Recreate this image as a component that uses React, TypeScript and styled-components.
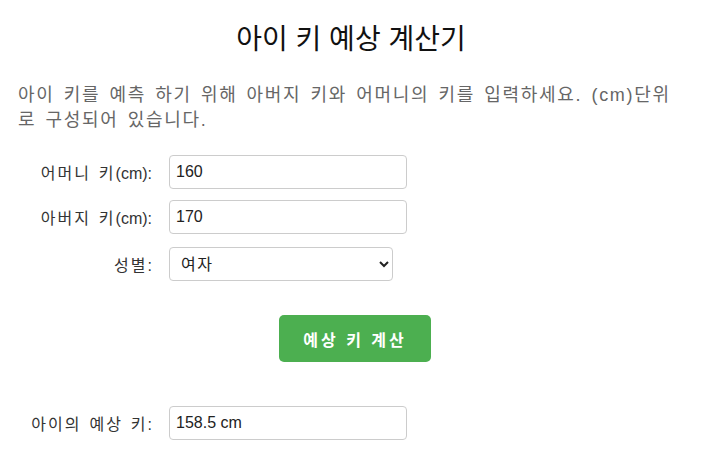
import React, { useState } from "react";
import styled, { createGlobalStyle } from "styled-components";

const Global = createGlobalStyle`
  html, body { margin: 0; padding: 0; background: #fff; }
  body { font-family: "Liberation Sans", "Noto Sans CJK KR", sans-serif; }
`;

const Page = styled.div`
  padding: 18px 18px 0 18px;
  font-family: "Liberation Sans", "Noto Sans CJK KR", sans-serif;
`;

const Title = styled.h1`
  margin: 0;
  padding-top: 2px;
  text-align: center;
  font-size: 28px;
  font-weight: 400;
  line-height: 40px;
  color: #111;
`;

const Intro = styled.p`
  margin: 23px 0 0 0;
  font-size: 18px;
  line-height: 25px;
  letter-spacing: 1.7px;
  word-spacing: 2.5px;
  color: #666;
`;

const Form = styled.div`
  margin-top: 22px;
  display: flex;
  flex-direction: column;
`;

const Row = styled.div<{ $gap: number }>`
  display: flex;
  align-items: center;
  margin-top: ${(p) => p.$gap}px;
`;

const Label = styled.label`
  width: 134px;
  margin-right: 17px;
  text-align: right;
  font-size: 16px;
  color: #333;
`;

const Ko = styled.span`
  letter-spacing: 2px;
  word-spacing: 1.5px;
`;

const Input = styled.input`
  box-sizing: border-box;
  width: 238px;
  height: 34px;
  padding: 0 6px;
  border: 1px solid #ccc;
  border-radius: 4px;
  font-family: "Liberation Sans", "Noto Sans CJK KR", sans-serif;
  font-size: 16px;
  color: #222;
  outline: none;
`;

const Select = styled.select`
  box-sizing: border-box;
  width: 224px;
  height: 34px;
  padding: 0 7px;
  border: 1px solid #ccc;
  border-radius: 4px;
  font-family: "Liberation Sans", "Noto Sans CJK KR", sans-serif;
  font-size: 16px;
  letter-spacing: 1.6px;
  color: #222;
  background: #fff;
  outline: none;
`;

const ButtonRow = styled.div`
  display: flex;
  justify-content: center;
  margin-top: 34px;
  margin-left: 8px;
`;

const Button = styled.button`
  width: 152px;
  height: 47px;
  border: none;
  border-radius: 5px;
  background: #4caf50;
  color: #fff;
  font-family: "Liberation Sans", "Noto Sans CJK KR", sans-serif;
  font-size: 16px;
  font-weight: 700;
  letter-spacing: 3px;
  cursor: pointer;
`;

export default function App() {
  const [mother, setMother] = useState("160");
  const [father, setFather] = useState("170");
  const [gender, setGender] = useState("female");
  const [result, setResult] = useState("158.5 cm");

  const calc = () => {
    const m = parseFloat(mother);
    const f = parseFloat(father);
    if (isNaN(m) || isNaN(f)) return;
    const v = gender === "male" ? (m + f + 13) / 2 : (m + f - 13) / 2;
    setResult(`${v.toFixed(1)} cm`);
  };

  return (
    <>
      <Global />
      <Page>
        <Title>아이 키 예상 계산기</Title>
        <Intro>
          아이 키를 예측 하기 위해 아버지 키와 어머니의 키를 입력하세요. (cm)단위로 구성되어 있습니다.
        </Intro>
        <Form>
          <Row $gap={0}>
            <Label><Ko>어머니 키</Ko>(cm):</Label>
            <Input value={mother} onChange={(e) => setMother(e.target.value)} />
          </Row>
          <Row $gap={11}>
            <Label><Ko>아버지 키</Ko>(cm):</Label>
            <Input value={father} onChange={(e) => setFather(e.target.value)} />
          </Row>
          <Row $gap={13}>
            <Label><Ko>성별</Ko>:</Label>
            <Select value={gender} onChange={(e) => setGender(e.target.value)}>
              <option value="female">여자</option>
              <option value="male">남자</option>
            </Select>
          </Row>
          <ButtonRow>
            <Button onClick={calc}>예상 키 계산</Button>
          </ButtonRow>
          <Row $gap={44}>
            <Label><Ko>아이의 예상 키</Ko>:</Label>
            <Input value={result} readOnly />
          </Row>
        </Form>
      </Page>
    </>
  );
}
